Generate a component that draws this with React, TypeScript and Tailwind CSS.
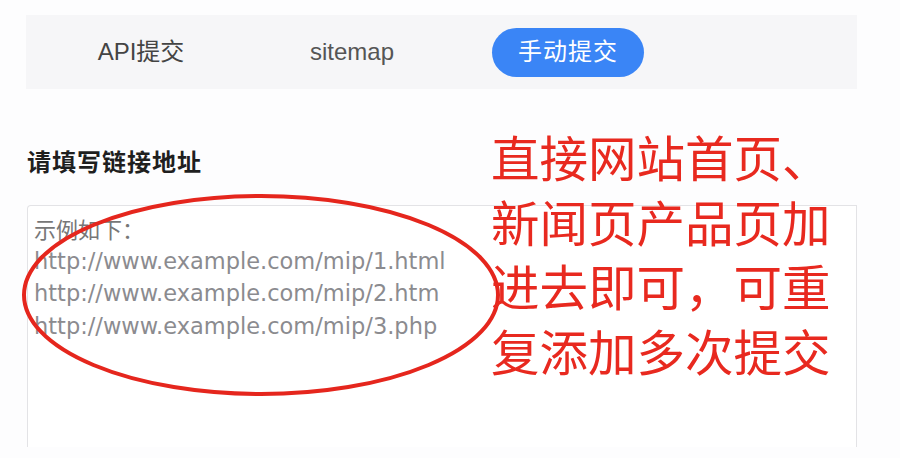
import React from "react";

const cjk = '"Noto Sans CJK SC", sans-serif';

export default function App() {
  return (
    <div
      className="relative w-[900px] h-[458px] overflow-hidden bg-[#fdfdfe]"
      style={{ fontFamily: '"Liberation Sans", "Noto Sans CJK SC", sans-serif' }}
    >
      <div className="pt-[15px] px-[26px]">
        {/* tab bar */}
        <div className="flex items-center h-[74px] w-[831px] bg-[#f6f6f8]">
          <div className="ml-[39px] w-[152px] h-[49px] flex items-center justify-center text-[24px] text-[#444]">
            API提交
          </div>
          <div className="ml-[59px] w-[152px] h-[49px] flex items-center justify-center text-[24px] text-[#555]">
            sitemap
          </div>
          <div className="ml-[64px] w-[152px] h-[49px] flex items-center justify-center rounded-full bg-[#3a85f6] text-white text-[24px] tracking-[1px]">
            手动提交
          </div>
        </div>

        {/* label */}
        <div
          className="mt-[55px] ml-[1px] text-[24px] leading-[34px] font-bold text-[#1f1f1f] tracking-[1px]"
          style={{ fontFamily: cjk }}
        >
          请填写链接地址
        </div>

        {/* textarea */}
        <div
          className="mt-[27px] ml-[1px] w-[830px] h-[242px] border border-b-0 border-[#e3e3e6] rounded-tl-[4px] bg-white pl-[6px] pt-[6px] text-[22.5px] leading-[32.5px]"
          style={{ fontFamily: '"DejaVu Sans", "Noto Sans CJK SC", sans-serif' }}
        >
          <div className="text-[#777] text-[22px]" style={{ fontFamily: cjk }}>
            示例如下：
          </div>
          <div className="text-[#8b8b8f]">http://www.example.com/mip/1.html</div>
          <div className="text-[#8b8b8f]">http://www.example.com/mip/2.htm</div>
          <div className="text-[#8b8b8f]">http://www.example.com/mip/3.php</div>
        </div>
      </div>

      {/* red annotation ellipse */}
      <svg
        className="absolute left-[21px] top-[193px]"
        width="480"
        height="204"
        viewBox="0 0 480 204"
      >
        <ellipse cx="240" cy="102" rx="237" ry="99" fill="none" stroke="#e5261d" strokeWidth="4" />
      </svg>

      {/* red annotation text */}
      <div
        className="absolute left-[491px] top-[124px] text-[48.5px] leading-[64.5px] text-[#e8291f]"
        style={{ fontFamily: cjk }}
      >
        <div>直接网站首页、</div>
        <div>新闻页产品页加</div>
        <div>进去即可，可重</div>
        <div>复添加多次提交</div>
      </div>
    </div>
  );
}
